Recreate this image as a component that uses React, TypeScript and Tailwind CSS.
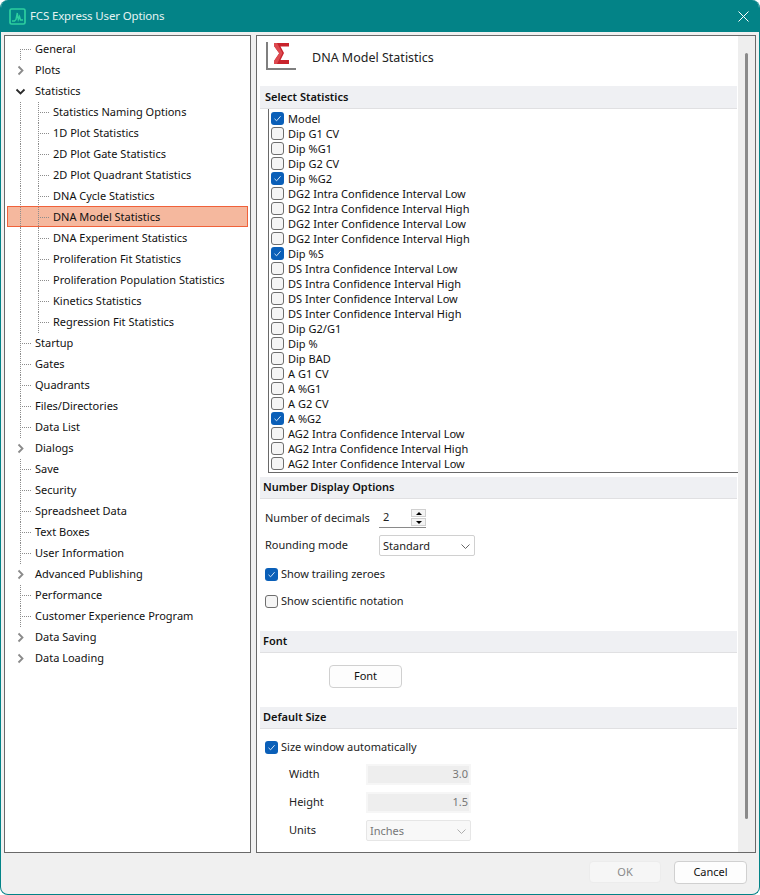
import React from "react";

const font = "font-['Noto_Sans',sans-serif]";

type Row = { label: string; level: 0 | 1; exp?: "r" | "d"; sel?: boolean };
const rows: Row[] = [
  { label: "General", level: 0 },
  { label: "Plots", level: 0, exp: "r" },
  { label: "Statistics", level: 0, exp: "d" },
  { label: "Statistics Naming Options", level: 1 },
  { label: "1D Plot Statistics", level: 1 },
  { label: "2D Plot Gate Statistics", level: 1 },
  { label: "2D Plot Quadrant Statistics", level: 1 },
  { label: "DNA Cycle Statistics", level: 1 },
  { label: "DNA Model Statistics", level: 1, sel: true },
  { label: "DNA Experiment Statistics", level: 1 },
  { label: "Proliferation Fit Statistics", level: 1 },
  { label: "Proliferation Population Statistics", level: 1 },
  { label: "Kinetics Statistics", level: 1 },
  { label: "Regression Fit Statistics", level: 1 },
  { label: "Startup", level: 0 },
  { label: "Gates", level: 0 },
  { label: "Quadrants", level: 0 },
  { label: "Files/Directories", level: 0 },
  { label: "Data List", level: 0 },
  { label: "Dialogs", level: 0, exp: "r" },
  { label: "Save", level: 0 },
  { label: "Security", level: 0 },
  { label: "Spreadsheet Data", level: 0 },
  { label: "Text Boxes", level: 0 },
  { label: "User Information", level: 0 },
  { label: "Advanced Publishing", level: 0, exp: "r" },
  { label: "Performance", level: 0 },
  { label: "Customer Experience Program", level: 0 },
  { label: "Data Saving", level: 0, exp: "r" },
  { label: "Data Loading", level: 0, exp: "r" },
];

const stats: [string, boolean][] = [
  ["Model", true],
  ["Dip G1 CV", false],
  ["Dip %G1", false],
  ["Dip G2 CV", false],
  ["Dip %G2", true],
  ["DG2 Intra Confidence Interval Low", false],
  ["DG2 Intra Confidence Interval High", false],
  ["DG2 Inter Confidence Interval Low", false],
  ["DG2 Inter Confidence Interval High", false],
  ["Dip %S", true],
  ["DS Intra Confidence Interval Low", false],
  ["DS Intra Confidence Interval High", false],
  ["DS Inter Confidence Interval Low", false],
  ["DS Inter Confidence Interval High", false],
  ["Dip G2/G1", false],
  ["Dip %", false],
  ["Dip BAD", false],
  ["A G1 CV", false],
  ["A %G1", false],
  ["A G2 CV", false],
  ["A %G2", true],
  ["AG2 Intra Confidence Interval Low", false],
  ["AG2 Intra Confidence Interval High", false],
  ["AG2 Inter Confidence Interval Low", false],
];

function Check({ on }: { on: boolean }) {
  return on ? (
    <span className="flex h-[13px] w-[13px] shrink-0 items-center justify-center rounded-[3px] bg-[#0a5fb8]">
      <svg width="9" height="9" viewBox="0 0 9 9" fill="none">
        <path d="M1.5 4.8 3.6 6.8 7.6 2.2" stroke="#cfe3f7" strokeWidth="1" />
      </svg>
    </span>
  ) : (
    <span className="h-[13px] w-[13px] shrink-0 rounded-[3px] border border-[#6e6e6e] bg-[#f5f5f5]" />
  );
}

function Section({ title, className = "" }: { title: string; className?: string }) {
  return (
    <div className={`mr-[1px] flex h-[22px] items-center border-b border-[#e0e0e2] bg-[#eff0f3] pl-[3px] text-[11px] font-semibold text-[#111] ${className}`}>
      {title}
    </div>
  );
}

function Chevron({ dir }: { dir: "r" | "d" }) {
  const d = dir === "r" ? "M3.5 1.5 7.5 5.5 3.5 9.5" : "M1.5 3.5 5.5 7.5 9.5 3.5";
  return (
    <svg width="11" height="11" viewBox="0 0 11 11" fill="none">
      <path d={d} stroke={dir === "r" ? "#8a8a8a" : "#2b2b2b"} strokeWidth="1.8" />
    </svg>
  );
}

function ComboChevron() {
  return (
    <svg width="11" height="11" viewBox="0 0 11 11" fill="none">
      <path d="M1.5 3.5 5.5 7.5 9.5 3.5" stroke="#666" strokeWidth="1" />
    </svg>
  );
}

function TreeRow({ row, first }: { row: Row; first: boolean }) {
  return (
    <div className="relative flex h-[21px] items-center">
      {row.sel && <div className="absolute inset-x-[2px] -top-[1px] h-[21px] border border-[#f0613a] bg-[#f5b89e]" />}
      {!row.exp && (
        <span className={`absolute left-[15px] border-l border-dotted border-[#8c8c8c] ${first ? "top-[10px] h-[11px]" : "top-0 h-[21px]"}`} />
      )}
      {row.level === 1 && (
        <>
          <span className="absolute left-[33px] top-0 h-[21px] border-l border-dotted border-[#8c8c8c]" />
          <span className="absolute left-[33px] top-[10px] w-[11px] border-t border-dotted border-[#8c8c8c]" />
        </>
      )}
      {row.level === 0 && !row.exp && (
        <span className="absolute left-[15px] top-[10px] w-[11px] border-t border-dotted border-[#8c8c8c]" />
      )}
      {row.exp && (
        <span className="absolute left-[10px] top-[5px]">
          <Chevron dir={row.exp} />
        </span>
      )}
      <span className={`relative whitespace-nowrap text-[11px] text-[#111] ${row.level === 1 ? "ml-[48px]" : "ml-[30px]"}`}>
        {row.label}
      </span>
    </div>
  );
}

export default function App() {
  return (
    <div className={`flex h-[895px] w-[760px] flex-col overflow-hidden rounded-[8px] border-x border-b border-[#038387] bg-[#f0f0f0] ${font}`}>
      <div className="flex h-[32px] shrink-0 items-center bg-[#038387] pl-[8px] pr-[10px]">
        <svg width="17" height="17" viewBox="0 0 17 17" fill="none">
          <rect x="1" y="1" width="15" height="15" rx="1.5" stroke="#2ecf9f" strokeWidth="1.7" />
          <path d="M3 13h2.5l1.5-1.5L8.3 5l1 6.5 1.2-3 1 3.5H14" stroke="#2ecf9f" strokeWidth="1.4" />
        </svg>
        <span className="ml-[4px] text-[11.5px] tracking-[-0.15px] text-[#e6f3f3]">FCS Express User Options</span>
        <svg className="ml-auto" width="11" height="11" viewBox="0 0 11 11" fill="none">
          <path d="M.5.5l10 10M10.5.5l-10 10" stroke="#fff" strokeWidth="1" />
        </svg>
      </div>

      <div className="flex min-h-0 flex-1 gap-[5px] pl-[3px] pr-[3px] pt-[3px]">
        <div className="h-[818px] w-[247px] shrink-0 border border-[#696969] bg-white pt-[3px]">
          {rows.map((r, i) => (
            <TreeRow key={r.label} row={r} first={i === 0} />
          ))}
        </div>

        <div className="flex h-[818px] min-w-0 flex-1 border border-[#696969] bg-white">
          <div className="min-w-0 flex-1 pl-[3px]">
            <div className="flex h-[50px] items-start pl-[6px] pt-[6px]">
              <div className="flex h-[28px] w-[30px] shrink-0 items-start justify-center border-b-2 border-l-2 border-[#7f7f7f]">
                <svg className="mt-[1px]" width="16" height="21" viewBox="0 0 16 21">
                  <path d="M0 0H15V3.5H6.5L10 10 6.5 17H15V21H0V18L5.2 10.3 0 3Z" fill="#c8232c" />
                  <path d="M0 3 5.2 10.3 0 18V21H3L8.5 10 3 0H0Z" fill="#dc4a50" />
                </svg>
              </div>
              <span className="ml-[16px] mt-[7px] text-[12.5px] text-[#222]">DNA Model Statistics</span>
            </div>
            <Section title="Select Statistics" className="h-[23px] border-[#8a8a8a] pl-[5px]" />
            <div className="ml-[8px] h-[364px] overflow-hidden border-b border-l border-[#696969] pl-[2px] pt-[2px]">
              {stats.map(([label, on]) => (
                <div key={label} className="flex h-[15px] items-center gap-[4px] text-[11px] leading-[15px] text-[#111]">
                  <Check on={on} />
                  <span className="whitespace-nowrap">{label}</span>
                </div>
              ))}
            </div>
            <Section title="Number Display Options" className="mt-[4px] h-[22px]" />

            <div className="pl-[5px] text-[11px] text-[#222]">
              <div className="mt-[8px] flex h-[22px] items-center">
                <span className="w-[114px]">Number of decimals</span>
                <div className="flex h-[20px] w-[47px] items-center justify-between border-b border-[#8a8a8a] bg-white pl-[4px]">
                  <span>2</span>
                  <div className="flex flex-col gap-[1px]">
                    <span className="flex h-[8px] w-[15px] items-center justify-center border border-[#d0d0d0] bg-[#f4f4f4]">
                      <span className="h-0 w-0 border-x-[3px] border-b-[3px] border-x-transparent border-b-black" />
                    </span>
                    <span className="flex h-[8px] w-[15px] items-center justify-center border border-[#d0d0d0] bg-[#f4f4f4]">
                      <span className="h-0 w-0 border-x-[3px] border-t-[3px] border-x-transparent border-t-black" />
                    </span>
                  </div>
                </div>
              </div>
              <div className="mt-[6px] flex h-[21px] items-center">
                <span className="w-[114px]">Rounding mode</span>
                <div className="flex h-[21px] w-[96px] items-center justify-between rounded-[2px] border border-[#d0d0d0] bg-white pl-[3px] pr-[3px] pt-[1px]">
                  <span>Standard</span>
                  <ComboChevron />
                </div>
              </div>
              <label className="mt-[11px] flex h-[15px] items-center gap-[3px]">
                <Check on />
                <span>Show trailing zeroes</span>
              </label>
              <label className="mt-[12px] flex h-[15px] items-center gap-[3px]">
                <Check on={false} />
                <span>Show scientific notation</span>
              </label>
            </div>

            <Section title="Font" className="mt-[22px]" />
            <div className="flex h-[54px] items-center pb-[8px] pl-[69px]">
              <button className="h-[23px] w-[73px] rounded-[4px] border border-[#d0d0d0] bg-[#fdfdfd] text-[11px] text-[#111]">Font</button>
            </div>
            <Section title="Default Size" />

            <div className="pl-[5px] text-[11px] text-[#222]">
              <label className="mt-[11px] flex h-[15px] items-center gap-[3px]">
                <Check on />
                <span>Size window automatically</span>
              </label>
              <div className="mt-[9px] flex h-[21px] items-center">
                <span className="w-[101px] pl-[24px]">Width</span>
                <div className="flex h-[21px] w-[105px] items-center justify-end border-2 border-[#f6f6f6] bg-[#eeeeee] pr-[1px] text-[#777]">3.0</div>
              </div>
              <div className="mt-[7px] flex h-[21px] items-center">
                <span className="w-[101px] pl-[24px]">Height</span>
                <div className="flex h-[21px] w-[105px] items-center justify-end border-2 border-[#f6f6f6] bg-[#eeeeee] pr-[1px] text-[#777]">1.5</div>
              </div>
              <div className="mt-[7px] flex h-[21px] items-center">
                <span className="w-[101px] pl-[24px]">Units</span>
                <div className="flex h-[21px] w-[105px] items-center justify-between rounded-[2px] border border-[#e6e6e6] bg-[#f8f8f8] pl-[3px] pr-[3px] pt-[1px] text-[#777]">
                  <span>Inches</span>
                  <span className="opacity-50"><ComboChevron /></span>
                </div>
              </div>
            </div>
          </div>
          <div className="w-[17px] shrink-0 bg-[#eeeeee] pl-[7px] pt-[17px]">
            <div className="h-[766px] w-[3px] rounded-full bg-[#8a8a8a]" />
          </div>
        </div>
      </div>

      <div className="flex h-[41px] shrink-0 items-center justify-end gap-[13px] pb-[3px] pr-[12px] text-[11px]">
        <button className="h-[22px] w-[72px] rounded-[4px] border border-[#ececec] bg-[#f6f6f6] text-[#8a8a8a]">OK</button>
        <button className="h-[23px] w-[73px] rounded-[4px] border border-[#d0d0d0] bg-[#fdfdfd] text-[#111]">Cancel</button>
      </div>
    </div>
  );
}
